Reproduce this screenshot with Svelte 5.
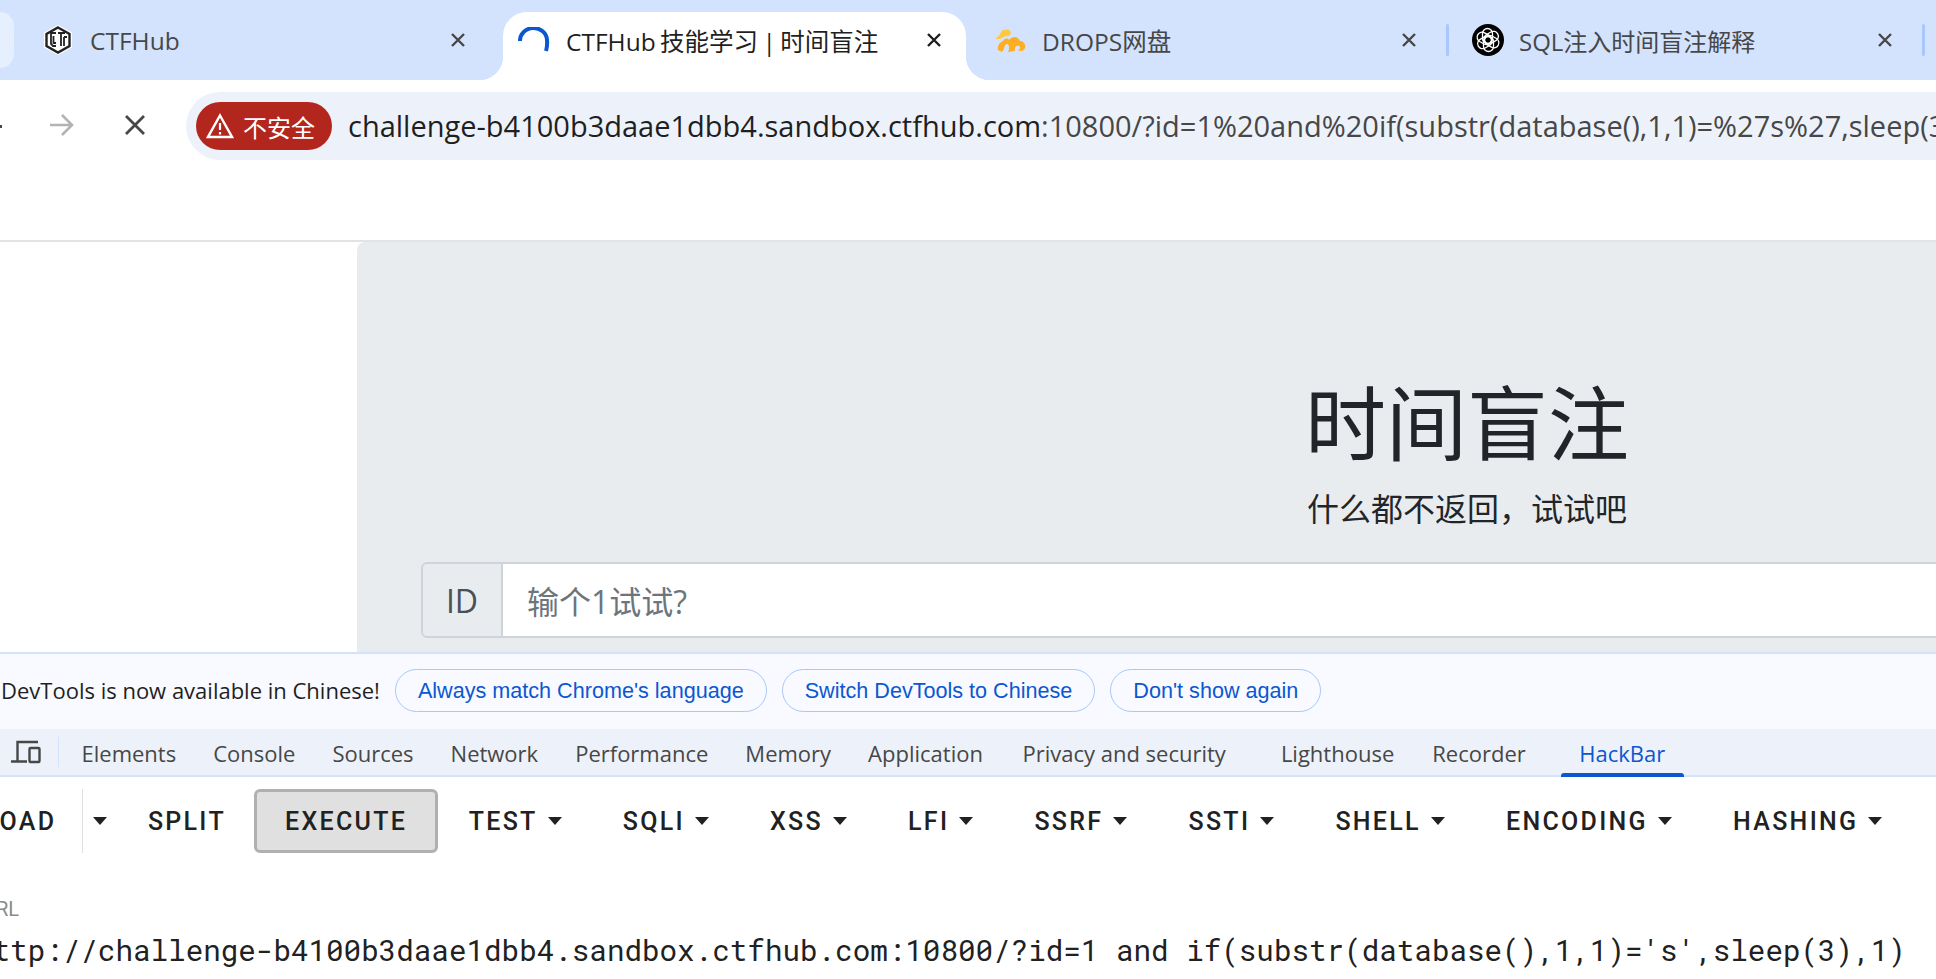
<script>
  const panels = ['Elements', 'Console', 'Sources', 'Network', 'Performance', 'Memory', 'Application', 'Privacy and security', 'Lighthouse', 'Recorder', 'HackBar'];
  const menus = ['TEST', 'SQLI', 'XSS', 'LFI', 'SSRF', 'SSTI', 'SHELL', 'ENCODING', 'HASHING'];
  const infoActions = ["Always match Chrome's language", 'Switch DevTools to Chinese', "Don't show again"];
  const knot = [0, 60, 120, 180, 240, 300];
</script>

<div class="window">
  <div class="tabstrip">
    <div class="stub"></div>

    <div class="tab t1">
      <svg class="favicon" width="28" height="30" viewBox="0 0 28 30">
        <polygon points="14,0 28,7.5 28,22.5 14,30 0,22.5 0,7.5" fill="#fff" />
        <polygon points="14,2.5 25.5,9 25.5,21 14,27.5 2.5,21 2.5,9" fill="#fff" stroke="#222" stroke-width="2.4" />
        <path d="M12 8H7v11l2 2h3M9.5 11v7h2.5M14 8h7M17 8v13M20 12v9M20 12h3" fill="none" stroke="#222" stroke-width="1.8" />
      </svg>
      <span class="label">CTFHub</span>
      <svg class="close" width="16" height="16" viewBox="0 0 16 16"><path d="M2 2l12 12M14 2L2 14" /></svg>
    </div>

    <div class="tab active">
      <svg class="favicon" width="32" height="26" viewBox="0 0 32 26">
        <path d="M2 14A13 12 0 0 1 29 13Q29.500 19 28 24" fill="none" stroke="#0b57d0" stroke-width="4" />
      </svg>
      <span class="label">CTFHub 技能学习 | 时间盲注</span>
      <svg class="close" width="16" height="16" viewBox="0 0 16 16"><path d="M2 2l12 12M14 2L2 14" /></svg>
    </div>

    <div class="tab t3">
      <svg class="favicon" width="32" height="24" viewBox="0 0 32 24">
        <path d="M1 11C4 9 6 7 7 4 9 1 14 1 16 3 18 5 16 8 14 8 10 8 8 10 6 11Z" fill="#ffc83d" />
        <path d="M4 22C3 18 6 14 9 13 11 10 14 10 15 12 18 8 24 8 26 13 30 13 32 17 31 20 30 23 26 24 24 22 26 22 27 19 25 18 22 17 20 20 21 23L14 24C16 20 15 16 13 16 10 16 11 21 8 24Z" fill="#ffae21" />
      </svg>
      <span class="label">DROPS网盘</span>
      <svg class="close" width="16" height="16" viewBox="0 0 16 16"><path d="M2 2l12 12M14 2L2 14" /></svg>
    </div>
    <div class="sep"></div>

    <div class="tab t4">
      <svg class="favicon" width="32" height="32" viewBox="0 0 32 32">
        <circle cx="16" cy="16" r="16" fill="#000" />
        {#each knot as angle}
          <rect x="10.500" y="4.500" width="10" height="15" rx="5" fill="none" stroke="#fff" stroke-width="1.300" transform="rotate({angle} 16 16)" />
        {/each}
      </svg>
      <span class="label">SQL注入时间盲注解释</span>
      <svg class="close" width="16" height="16" viewBox="0 0 16 16"><path d="M2 2l12 12M14 2L2 14" /></svg>
    </div>
    <div class="sep"></div>
  </div>

  <div class="toolbar">
    <div class="back"></div>
    <svg class="forward" width="26" height="24" viewBox="0 0 26 24">
      <path d="M1 12h22M13 2l10 10-10 10" fill="none" stroke="#b3b3b3" stroke-width="2.600" />
    </svg>
    <svg class="stop" width="22" height="22" viewBox="0 0 22 22">
      <path d="M2 2l18 18M20 2L2 20" fill="none" stroke="#474747" stroke-width="2.800" />
    </svg>
    <div class="omnibox">
      <div class="chip">
        <svg width="28" height="26" viewBox="0 0 28 26">
          <path d="M14 2.500L26 24H2Z" fill="none" stroke="#fff" stroke-width="2.400" />
          <path d="M14 10v7M14 19v2.500" stroke="#fff" stroke-width="2.200" />
        </svg>
        <span>不安全</span>
      </div>
      <div class="url"><span class="host">challenge-b4100b3daae1dbb4.sandbox.ctfhub.com</span>:10800/?id=1%20and%20if(substr(database(),1,1)=%27s%27,sleep(3),1)</div>
    </div>
  </div>

  <div class="page">
    <div class="side"></div>
    <div class="jumbotron">
      <h1>时间盲注</h1>
      <p>什么都不返回&#xFF0C;试试吧</p>
      <div class="input-group">
        <div class="addon">ID</div>
        <div class="input">输个1试试?</div>
      </div>
    </div>
  </div>

  <div class="devtools">
    <div class="infobar">
      <span class="info-text">DevTools is now available in Chinese!</span>
      {#each infoActions as action}
        <button class="pill">{action}</button>
      {/each}
    </div>

    <div class="panels">
      <svg class="device" width="32" height="26" viewBox="0 0 32 26">
        <path d="M28 3H7.500V22M1 22.500H17" fill="none" stroke="#474747" stroke-width="2.400" />
        <rect x="19.500" y="9" width="10" height="14" rx="1" fill="none" stroke="#474747" stroke-width="2.400" />
      </svg>
      <div class="divider"></div>
      {#each panels as panel}
        <div
          class="panel"
          class:selected={panel === 'HackBar'}
          class:privacy={panel === 'Privacy and security'}
          class:wide={panel === 'Lighthouse'}
          class:recorder={panel === 'Recorder'}
        >{panel}</div>
      {/each}
    </div>

    <div class="hackbar">
      <div class="actions">
        <span class="btn load">LOAD</span>
        <div class="caret-cell"><i class="caret"></i></div>
        <span class="btn">SPLIT</span>
        <span class="btn execute">EXECUTE</span>
        {#each menus as menu}
          <span class="btn">{menu}<i class="caret"></i></span>
        {/each}
      </div>
      <div class="field-label">URL</div>
      <div class="field-value">http://challenge-b4100b3daae1dbb4.sandbox.ctfhub.com:10800/?id=1 and if(substr(database(),1,1)='s',sleep(3),1)</div>
    </div>
  </div>
</div>

<style>
  :global(body) {
    margin: 0;
    overflow: hidden;
  }

  .window {
    width: 1936px;
    height: 979px;
    overflow: hidden;
    display: flex;
    flex-direction: column;
    background: #fff;
    font-family: "Open Sans", "Noto Sans CJK SC", sans-serif;
  }

  /* tab strip */
  .tabstrip {
    height: 80px;
    flex: none;
    display: flex;
    align-items: stretch;
    padding-top: 12px;
    box-sizing: border-box;
    background: #d3e3fd;
  }
  .stub {
    width: 14px;
    height: 56px;
    flex: none;
    background: #e6effe;
    border-radius: 0 16px 16px 0;
  }
  .tab {
    position: relative;
    flex: none;
    display: flex;
    align-items: center;
    box-sizing: border-box;
    padding-bottom: 12px;
    font-size: 24.500px;
    color: #474747;
  }
  .tab .label {
    flex: 1;
    white-space: nowrap;
    overflow: hidden;
  }
  .close {
    flex: none;
  }
  .close path {
    fill: none;
    stroke: #474747;
    stroke-width: 2.400;
  }
  .favicon {
    flex: none;
  }
  .t1 { width: 489px; padding-left: 30px; padding-right: 37px; }
  .t1 .favicon { margin-right: 18px; }
  .active {
    width: 463px;
    padding-left: 15px;
    padding-right: 24px;
    background: #fff;
    border-radius: 24px 24px 0 0;
    color: #1f1f1f;
    word-spacing: -2px;
  }
  .active .favicon { margin-right: 16px; }
  .active .close path { stroke: #1f1f1f; }
  .active::before,
  .active::after {
    content: "";
    position: absolute;
    bottom: 0;
    width: 24px;
    height: 24px;
  }
  .active::before {
    left: -24px;
    background: radial-gradient(circle at 0 0, transparent 24px, #fff 24.500px);
  }
  .active::after {
    right: -24px;
    background: radial-gradient(circle at 100% 0, transparent 24px, #fff 24.500px);
  }
  .t3 { width: 480px; padding-left: 28px; padding-right: 29px; }
  .t3 .favicon { margin-right: 16px; }
  .t4 { width: 473px; padding-left: 23px; padding-right: 29px; font-size: 24px; }
  .t4 .favicon { margin-right: 15px; }
  .sep {
    width: 3px;
    height: 32px;
    margin-top: 12px;
    flex: none;
    background: #a8c7fa;
    border-radius: 2px;
  }

  /* toolbar */
  .toolbar {
    height: 162px;
    flex: none;
    box-sizing: border-box;
    display: flex;
    align-items: flex-start;
    padding-top: 12px;
    background: #fff;
    border-bottom: 2px solid #e3e3e3;
  }
  .back {
    width: 2px;
    height: 3px;
    flex: none;
    margin-top: 33px;
    background: #474747;
  }
  .forward {
    flex: none;
    margin: 21px 0 0 47px;
  }
  .stop {
    flex: none;
    margin: 22px 0 0 49px;
  }
  .omnibox {
    flex: none;
    width: 1900px;
    height: 68px;
    margin-left: 40px;
    display: flex;
    align-items: center;
    padding-left: 10px;
    box-sizing: border-box;
    background: #edf2fa;
    border-radius: 34px 0 0 34px;
  }
  .chip {
    width: 136px;
    height: 48px;
    flex: none;
    box-sizing: border-box;
    display: flex;
    align-items: center;
    padding-left: 10px;
    gap: 9px;
    background: #b3261e;
    border-radius: 24px;
    color: #fff;
    font-size: 24px;
  }
  .url {
    margin-left: 16px;
    padding-bottom: 2px;
    white-space: nowrap;
    font-size: 29px;
    color: #474747;
  }
  .host {
    color: #1f1f1f;
  }

  /* page */
  .page {
    height: 410px;
    flex: none;
    display: flex;
    overflow: hidden;
    background: #fff;
  }
  .side {
    width: 357px;
    flex: none;
  }
  .jumbotron {
    width: 2220px;
    flex: none;
    box-sizing: border-box;
    padding: 133px 64px 0;
    background: #e9ecef;
    border-radius: 8px 0 0 0;
    color: #212529;
    text-align: center;
  }
  h1 {
    margin: 0;
    font-size: 81px;
    font-weight: 400;
    line-height: 96px;
  }
  p {
    margin: 14px 0 29px;
    font-size: 32px;
    line-height: 48px;
  }
  .input-group {
    height: 76px;
    display: flex;
    text-align: left;
    font-size: 32px;
  }
  .addon {
    width: 82px;
    flex: none;
    box-sizing: border-box;
    display: flex;
    align-items: center;
    justify-content: center;
    border: 2px solid #ced4da;
    border-radius: 6px 0 0 6px;
    color: #495057;
  }
  .input {
    flex: 1;
    box-sizing: border-box;
    display: flex;
    align-items: center;
    padding-left: 24px;
    background: #fff;
    border: 2px solid #ced4da;
    border-left: 0;
    color: #6c757d;
  }

  /* devtools */
  .devtools {
    flex: 1;
    display: flex;
    flex-direction: column;
    min-height: 0;
  }
  .infobar {
    height: 77px;
    flex: none;
    box-sizing: border-box;
    display: flex;
    align-items: center;
    gap: 15px;
    padding: 0 0 2px 1px;
    background: #f8faff;
    border-top: 2px solid #d3e3fd;
    font-size: 22px;
    color: #1f1f1f;
  }
  .info-text {
    white-space: nowrap;
    margin-bottom: 2px;
  }
  .pill {
    height: 43px;
    flex: none;
    padding: 0 22px;
    background: transparent;
    border: 1.500px solid #a8c7fa;
    border-radius: 22px;
    font-family: "Liberation Sans", Arial, sans-serif;
    font-size: 21.600px;
    color: #0b57d0;
  }
  .panels {
    height: 48px;
    flex: none;
    box-sizing: border-box;
    display: flex;
    align-items: center;
    background: #edf2fa;
    border-bottom: 2px solid #d3e3fd;
    font-size: 22px;
    color: #474747;
  }
  .device {
    margin-left: 10px;
    flex: none;
  }
  .divider {
    width: 1px;
    height: 30px;
    margin: 0 4px 0 16px;
    flex: none;
    background: #d3e3fd;
  }
  .panel {
    position: relative;
    height: 100%;
    box-sizing: border-box;
    display: flex;
    align-items: center;
    padding: 2px 18.500px 0;
    white-space: nowrap;
  }
  .panel.privacy { margin-left: 2.500px; }
  .panel.wide { margin-left: 18px; }
  .panel.recorder { margin-left: 1px; }
  .panel.selected { margin-left: 16.500px; color: #0b57d0; }
  .panel.selected::after {
    content: "";
    position: absolute;
    left: 0;
    right: 0;
    bottom: -2px;
    height: 4px;
    background: #0b57d0;
    border-radius: 3px 3px 0 0;
  }

  /* hackbar */
  .hackbar {
    flex: 1;
    min-height: 0;
    background: #fff;
    color: #212121;
  }
  .actions {
    height: 64px;
    margin-top: 12px;
    display: flex;
    align-items: center;
    margin-left: -46px;
    font-family: Roboto, "Liberation Sans", sans-serif;
    font-size: 25px;
    font-weight: 500;
    letter-spacing: 2.300px;
  }
  .btn {
    flex: none;
    display: inline-flex;
    align-items: center;
    padding: 0 30.550px;
    height: 100%;
    box-sizing: border-box;
  }
  .load {
    padding-right: 26px;
    border-right: 1px solid #e0e0e0;
  }
  .caret-cell {
    width: 34px;
    display: flex;
    justify-content: center;
  }
  .caret {
    width: 0;
    height: 0;
    margin-left: 10px;
    border-left: 7.500px solid transparent;
    border-right: 7.500px solid transparent;
    border-top: 8px solid #212121;
  }
  .caret-cell .caret { margin-left: 0; }
  .execute {
    background: #e0e0e0;
    border: 3px solid #b0b0b0;
    border-radius: 6px;
    padding: 0 27.500px;
    margin: 0 0.500px 0 -2px;
  }
  .field-label {
    margin: 43px 0 0 -17px;
    font-family: Roboto, "Liberation Sans", sans-serif;
    font-size: 20px;
    line-height: 26px;
    color: #8a8a8a;
  }
  .field-value {
    margin: 8px 0 0 -25px;
    white-space: nowrap;
    font-family: "Roboto Mono", "DejaVu Sans Mono", monospace;
    font-size: 29.250px;
    line-height: 40px;
    color: #212121;
  }
</style>
